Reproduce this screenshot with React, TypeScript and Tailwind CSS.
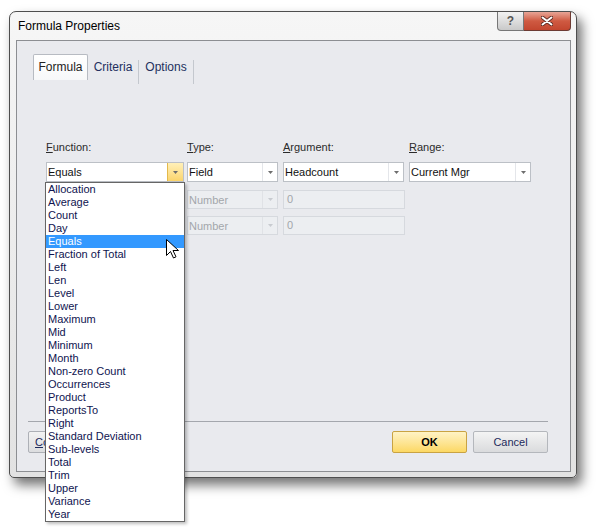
import React from 'react';

const functions = [
  'Allocation', 'Average', 'Count', 'Day', 'Equals', 'Fraction of Total', 'Left', 'Len', 'Level',
  'Lower', 'Maximum', 'Mid', 'Minimum', 'Month', 'Non-zero Count', 'Occurrences', 'Product',
  'ReportsTo', 'Right', 'Standard Deviation', 'Sub-levels', 'Total', 'Trim', 'Upper', 'Variance', 'Year',
];

// small down arrow used in the combo buttons
const Arrow = ({ light }: { light?: boolean }) => (
  <svg width="5" height="3" viewBox="0 0 5 3">
    <path d="M0 0h5L2.5 3z" fill={light ? '#c8cbd0' : '#6d6d6d'} />
  </svg>
);

type ComboProps = { text: string; width: string; hot?: boolean; disabled?: boolean };

const Combo = ({ text, width, hot, disabled }: ComboProps) => (
  <div
    className={`flex ${width} ${disabled ? 'h-[19px] border border-[#d6d9de] bg-[#eceef1]' : 'h-[20px] border border-[#bcc0c6] bg-white'}`}
  >
    <div className={`flex-1 pl-[1px] text-[11px] leading-[18px] ${disabled ? 'text-[#a3a6ab]' : 'text-[#111]'}`}>
      {text}
    </div>
    {hot ? (
      <div className="flex w-[16px] items-center justify-center border-l border-[#e3b94c] bg-gradient-to-b from-[#fff0b8] to-[#fbd46a]">
        <Arrow />
      </div>
    ) : (
      <div className={`flex w-[15px] items-center justify-center border-l ${disabled ? 'border-[#e0e2e6]' : 'border-[#e4e6ea]'}`}>
        <Arrow light={disabled} />
      </div>
    )}
  </div>
);

const TextBox = ({ width }: { width: string }) => (
  <div className={`h-[19px] ${width} border border-[#d6d9de] bg-[#eceef1] pl-[3px] text-[11px] leading-[17px] text-[#a3a6ab]`}>0</div>
);

const Label = ({ first, rest }: { first: string; rest: string }) => (
  <div className="h-[13px] text-[11px] leading-[13px] text-[#2b2b2b]">
    <span className="underline underline-offset-[1px]">{first}</span>
    {rest}
  </div>
);

export default function App() {
  return (
    <div className="relative h-[527px] w-[596px] overflow-hidden bg-white font-['Liberation_Sans',Arial,sans-serif]">
      {/* dialog window */}
      <div className="ml-[9px] mt-[11px] flex h-[467px] w-[568px] flex-col rounded-t-[7px] rounded-b-[5px] border border-[#4e4e4e] bg-gradient-to-b from-[#f6f6f6] via-[#ececec] to-[#e2e2e2] pb-[5px] pl-[6px] pr-[5px] shadow-[5px_7px_12px_rgba(0,0,0,0.55)]">
        {/* title bar */}
        <div className="flex h-[28px] items-start justify-between">
          <div className="pl-[2px] pt-[7px] text-[12px] leading-[14px] text-black">Formula Properties</div>
          <div className="flex">
            <div className="flex h-[19px] w-[27px] items-center justify-center rounded-bl-[4px] border border-t-0 border-[#777] bg-gradient-to-b from-[#f2f2f2] to-[#c9c9c9] text-[12px] font-bold text-[#555]">
              ?
            </div>
            <div className="flex h-[19px] w-[47px] items-center justify-center rounded-br-[4px] border border-l-0 border-t-0 border-[#6d3b33] bg-gradient-to-b from-[#e7a496] via-[#cf5a42] to-[#c2462f]">
              <svg width="12" height="10" viewBox="0 0 12 10">
                <path d="M1.5 1.5l9 7M10.5 1.5l-9 7" stroke="#5a2a22" strokeWidth="3.6" strokeLinecap="round" />
                <path d="M1.5 1.5l9 7M10.5 1.5l-9 7" stroke="#fff" strokeWidth="2" strokeLinecap="round" />
              </svg>
            </div>
          </div>
        </div>

        {/* client area */}
        <div className="flex flex-1 flex-col border border-[#8c8e92] bg-[#e9eaee]">
          {/* tabs */}
          <div className="ml-[16px] mt-[13px] flex h-[26px] text-[12px]">
            <div className="w-[55px] rounded-t-[2px] border border-b-0 border-[#b7bbc2] bg-gradient-to-b from-white to-[#f7f8f9] pt-[5px] text-center leading-[14px] text-[#222]">
              Formula
            </div>
            <div className="w-[51px] pt-[6px] text-center leading-[14px] text-[#24305e]">
              <div className="h-[24px] border-r border-[#c4c8ce]">Criteria</div>
            </div>
            <div className="w-[55px] pt-[6px] text-center leading-[14px] text-[#24305e]">
              <div className="h-[24px] border-r border-[#c4c8ce]">Options</div>
            </div>
          </div>

          {/* fields */}
          <div className="ml-[29px] mt-[61px] flex">
            <div className="w-[141px]">
              <Label first="F" rest="unction:" />
              <div className="mt-[8px]">
                <Combo text="Equals" width="w-[138px]" hot />
              </div>
            </div>
            <div className="w-[96px]">
              <Label first="T" rest="ype:" />
              <div className="mt-[8px] flex flex-col gap-[8px]">
                <Combo text="Field" width="w-[91px]" />
                <Combo text="Number" width="w-[91px]" disabled />
              </div>
              <div className="mt-[7px]">
                <Combo text="Number" width="w-[91px]" disabled />
              </div>
            </div>
            <div className="w-[126px]">
              <Label first="A" rest="rgument:" />
              <div className="mt-[8px] flex flex-col gap-[8px]">
                <Combo text="Headcount" width="w-[121px]" />
                <TextBox width="w-[122px]" />
              </div>
              <div className="mt-[7px]">
                <TextBox width="w-[122px]" />
              </div>
            </div>
            <div className="w-[122px]">
              <Label first="R" rest="ange:" />
              <div className="mt-[8px]">
                <Combo text="Current Mgr" width="w-[122px]" />
              </div>
            </div>
          </div>

          {/* footer */}
          <div className="mt-auto px-[11px] pb-[18px] pr-[22px]">
            <div className="h-[1px] bg-[#a4a7ad]" />
            <div className="mt-[9px] flex items-center">
              <div className="flex h-[22px] w-[80px] items-center rounded-[2px] border border-[#adb0b6] bg-gradient-to-b from-[#f3f3f3] to-[#dcdddf] pl-[6px] text-[11px] text-[#1d2a5c]">
                <span className="underline">C</span>o
              </div>
              <div className="ml-auto flex h-[22px] w-[75px] items-center justify-center rounded-[2px] border border-[#c9a343] bg-gradient-to-b from-[#fff3c4] to-[#fcd862] text-[11px] font-bold text-black">
                OK
              </div>
              <div className="ml-[6px] flex h-[22px] w-[75px] items-center justify-center rounded-[2px] border border-[#b4b7bc] bg-gradient-to-b from-[#f4f4f4] to-[#dadbdd] text-[11px] text-[#1d2a5c]">
                Cancel
              </div>
            </div>
          </div>
        </div>
      </div>

      {/* open dropdown list */}
      <div className="absolute left-[45px] top-[182px] w-[140px] border border-[#666] bg-white shadow-[2px_2px_3px_rgba(0,0,0,0.25)]">
        {functions.map(f => (
          <div
            key={f}
            className={`h-[13px] pl-[2px] text-[11px] leading-[13px] ${f === 'Equals' ? 'bg-[#3399ff] text-white' : 'text-[#0f1450]'}`}
          >
            {f}
          </div>
        ))}
      </div>

      {/* mouse pointer */}
      <svg className="absolute left-[166px] top-[239px]" width="13" height="20" viewBox="0 0 13 20">
        <path d="M0.5 0.5v16l4-4 3 6.5 2.5-1.2-3-6.3h5.5z" fill="#fff" stroke="#000" strokeWidth="1" strokeLinejoin="round" />
      </svg>
    </div>
  );
}
